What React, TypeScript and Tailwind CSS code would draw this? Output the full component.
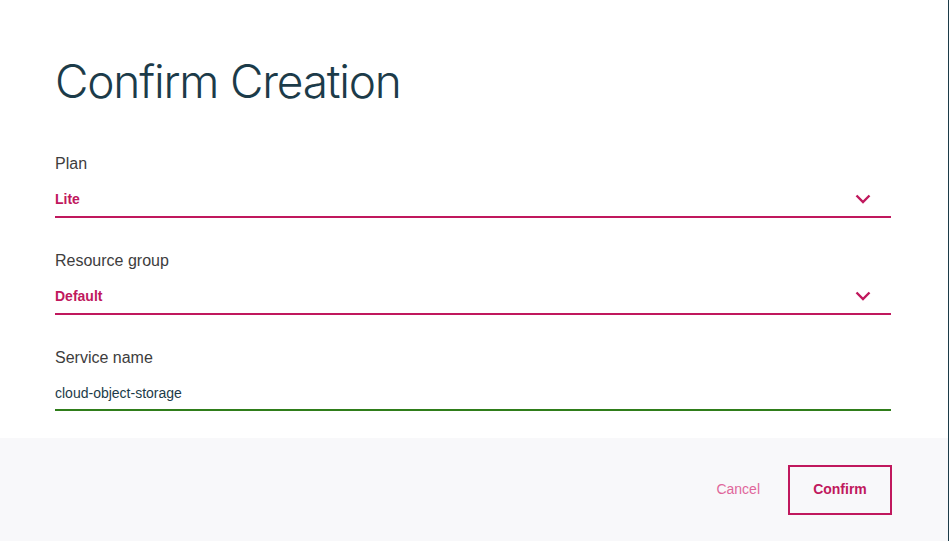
const font = { fontFamily: '"Liberation Sans", Arial, sans-serif' };

const Chevron = () => (
  <svg width="16" height="10" viewBox="0 0 16 10" className="mr-[20px]">
    <polyline points="1.5,1.5 8,8 14.5,1.5" fill="none" stroke="#c0185d" strokeWidth="2.4" />
  </svg>
);

const SelectField = ({ label, value }: { label: string; value: string }) => (
  <div className="flex flex-col">
    <label className="text-[16px] leading-5 text-[#3d3d3d]">{label}</label>
    <div className="mt-[14px] flex h-[30px] items-center justify-between border-b-2 border-[#c0185d] pb-[6px]">
      <span className="text-[14px] font-bold text-[#c0185d]">{value}</span>
      <Chevron />
    </div>
  </div>
);

export default function App() {
  return (
    <div className="flex h-[541px] w-[949px] bg-white" style={font}>
      <div className="flex flex-1 flex-col">
        <div className="flex flex-1 flex-col px-[55px] pr-[57px]">
          <h1 className="mt-[53px] font-['Inter',sans-serif] text-[46px] font-light leading-[56px] tracking-[-1.2px] text-[#1c3b49]">
            Confirm Creation
          </h1>
          <div className="mt-[45px] flex flex-col gap-[33px]">
            <SelectField label="Plan" value="Lite" />
            <SelectField label="Resource group" value="Default" />
            <div className="flex flex-col">
              <label className="text-[16px] leading-5 text-[#3d3d3d]">Service name</label>
              <div className="mt-[13px] flex h-[30px] items-center border-b-2 border-[#2f7d1a] pb-1">
                <span className="text-[14px] text-[#1c3b49]">cloud-object-storage</span>
              </div>
            </div>
          </div>
        </div>
        <div className="flex h-[103px] items-center justify-end gap-[28px] bg-[#f8f8fa] pr-[56px]">
          <button className="text-[14px] text-[#e0679a]">Cancel</button>
          <button className="h-[50px] w-[104px] border-2 border-[#c0185d] text-[14px] font-bold text-[#c0185d]">
            Confirm
          </button>
        </div>
      </div>
      <div className="w-px bg-[#1c3b49]" />
    </div>
  );
}
